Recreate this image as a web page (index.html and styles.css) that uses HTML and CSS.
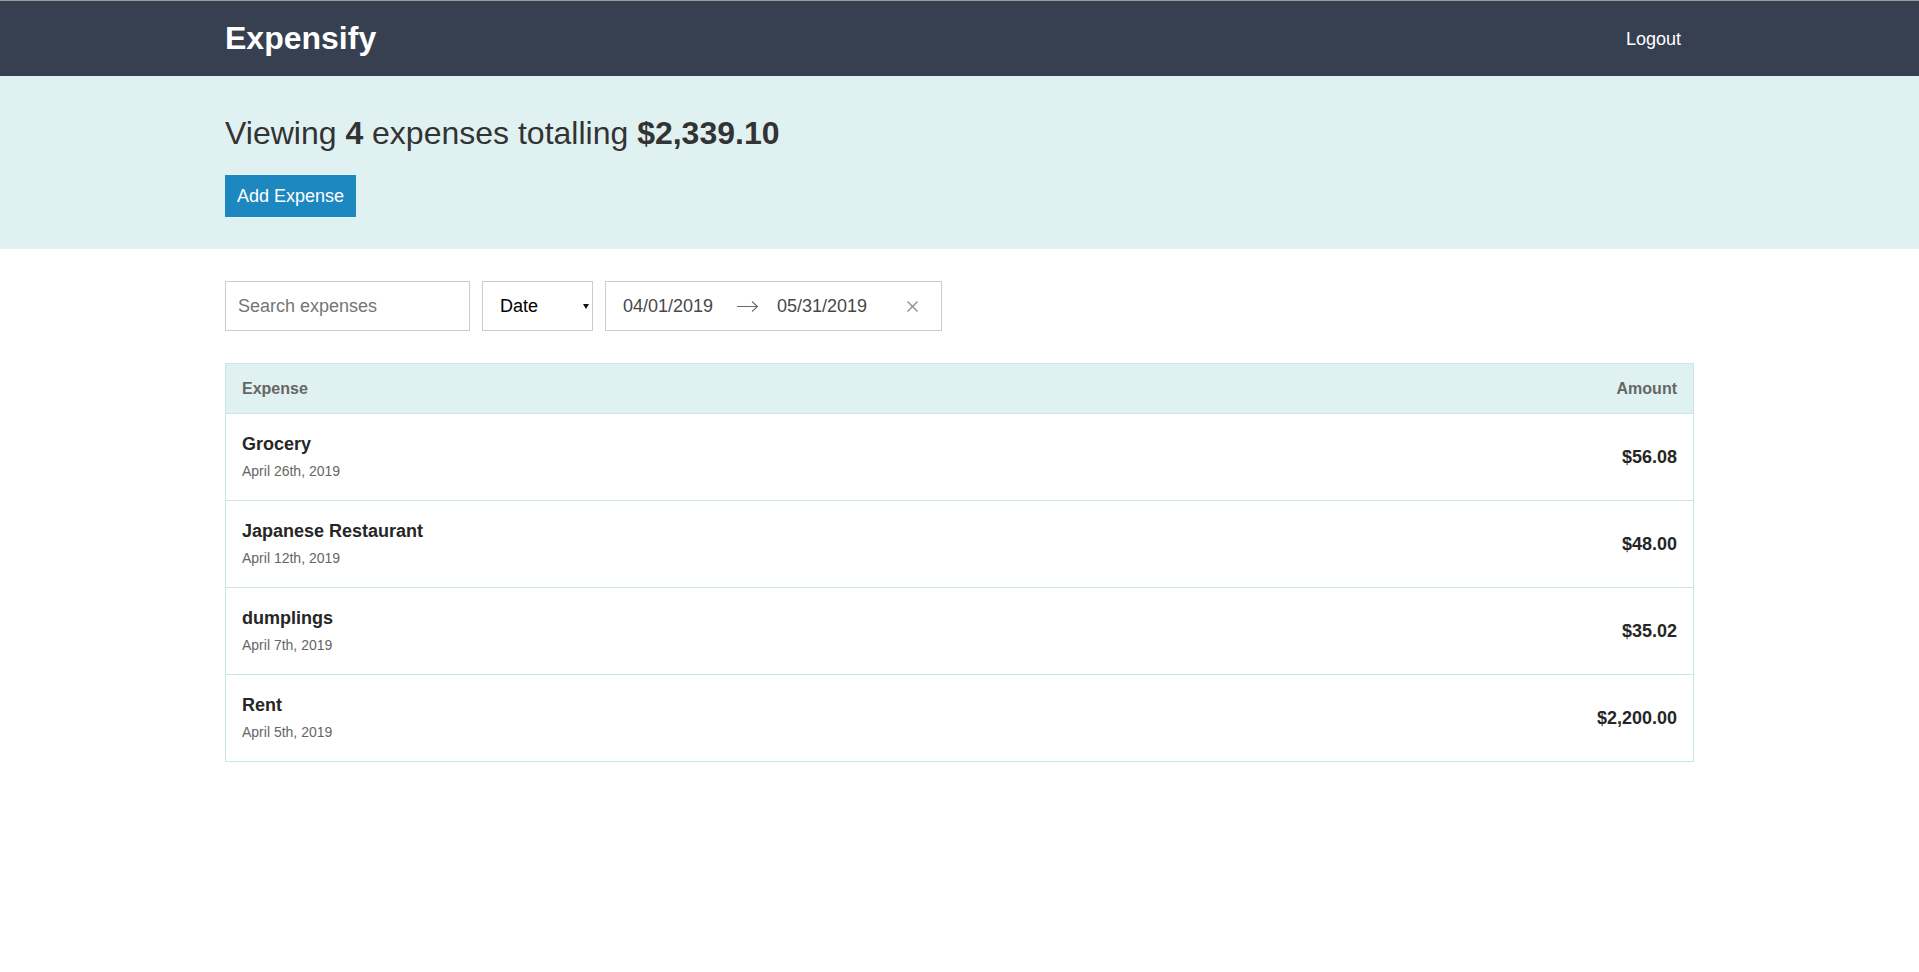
FILE: index.html
```html
<!DOCTYPE html>
<html lang="en">
<head>
<meta charset="utf-8">
<title>Expensify</title>
<link rel="stylesheet" href="styles.css">
</head>
<body>
<header class="header">
  <div class="container header__content">
    <h1 class="header__title">Expensify</h1>
    <button class="button button--link">Logout</button>
  </div>
</header>
<section class="page-header">
  <div class="container">
    <h2 class="page-header__title">Viewing <span>4</span> expenses totalling <span>$2,339.10</span></h2>
    <button class="button">Add Expense</button>
  </div>
</section>
<main class="container">
  <div class="input-group">
    <input class="text-input search" type="text" placeholder="Search expenses">
    <div class="select-wrap">
      <select class="select">
        <option>Date</option>
        <option>Amount</option>
      </select>
    </div>
    <div class="date-range">
      <span class="date-range__date date-range__start">04/01/2019</span>
      <svg class="date-range__arrow" width="22" height="12" viewBox="0 0 22 12"><path d="M0 6.5H20.5M15 1.5L20.5 6.5L15 11.5" fill="none" stroke="#6b6b6b" stroke-width="1.1"/></svg>
      <span class="date-range__date date-range__end">05/31/2019</span>
      <svg class="date-range__clear" width="11" height="11" viewBox="0 0 11 11"><path d="M0.5 0.5L10.5 10.5M10.5 0.5L0.5 10.5" fill="none" stroke="#8a8a8a" stroke-width="1.3"/></svg>
    </div>
  </div>
  <div class="list">
    <div class="list-header">
      <div>Expense</div>
      <div>Amount</div>
    </div>
    <div class="list-body">
      <div class="list-item">
        <div>
          <h3 class="list-item__title">Grocery</h3>
          <div class="list-item__sub-title">April 26th, 2019</div>
        </div>
        <h3 class="list-item__data">$56.08</h3>
      </div>
      <div class="list-item">
        <div>
          <h3 class="list-item__title">Japanese Restaurant</h3>
          <div class="list-item__sub-title">April 12th, 2019</div>
        </div>
        <h3 class="list-item__data">$48.00</h3>
      </div>
      <div class="list-item">
        <div>
          <h3 class="list-item__title">dumplings</h3>
          <div class="list-item__sub-title">April 7th, 2019</div>
        </div>
        <h3 class="list-item__data">$35.02</h3>
      </div>
      <div class="list-item">
        <div>
          <h3 class="list-item__title">Rent</h3>
          <div class="list-item__sub-title">April 5th, 2019</div>
        </div>
        <h3 class="list-item__data">$2,200.00</h3>
      </div>
    </div>
  </div>
</main>
</body>
</html>
```
FILE: styles.css
```css
* {
  box-sizing: border-box;
}

html, body {
  margin: 0;
  padding: 0;
}

body {
  font-family: "Liberation Sans", Arial, Helvetica, sans-serif;
  font-size: 16px;
  line-height: 1.6;
  color: #333333;
  background: #ffffff;
}

.container {
  width: 1469px;
  margin: 0 auto;
}

.header {
  background: #364051;
  border-top: 1px solid #9c9c9c;
}

.header__content {
  display: flex;
  justify-content: space-between;
  align-items: center;
  padding: 12px 0;
}

.header__title {
  margin: 0;
  color: #ffffff;
  font-size: 32px;
  font-weight: 700;
  line-height: 51px;
}

.button {
  background: #1c88bf;
  border: none;
  color: #ffffff;
  font-family: "Liberation Sans", Arial, sans-serif;
  font-size: 18px;
  font-weight: 400;
  line-height: 1;
  padding: 12px;
  cursor: pointer;
}

.button--link {
  background: none;
  margin-right: 1px;
}

.page-header {
  background: #dff2f1;
  padding: 32px 0 32px;
  margin-bottom: 32px;
}

.page-header__title {
  margin: 0 0 16px 0;
  font-size: 32px;
  font-weight: 400;
  line-height: 51px;
  color: #333333;
}

.page-header__title span {
  font-weight: 700;
}

.input-group {
  display: flex;
  gap: 12px;
  margin-bottom: 32px;
}

.text-input,
.select {
  height: 50px;
  border: 1px solid #cacccd;
  font-family: "Liberation Sans", Arial, sans-serif;
  font-size: 18px;
  padding: 0 12px;
  background: #ffffff;
  color: #000000;
  border-radius: 0;
  outline: none;
}

.search {
  width: 245px;
}

.search::placeholder {
  color: #757575;
}

.select-wrap {
  position: relative;
  width: 111px;
}

.select {
  width: 111px;
  padding-left: 17px;
  appearance: none;
  -webkit-appearance: none;
}

.select-wrap::after {
  content: "";
  position: absolute;
  left: 101px;
  top: 23px;
  border-left: 3px solid transparent;
  border-right: 3px solid transparent;
  border-top: 5px solid #111111;
  pointer-events: none;
}

.date-range {
  width: 337px;
  height: 50px;
  border: 1px solid #cacccd;
  display: flex;
  align-items: center;
  padding-left: 17px;
  color: #484848;
  font-size: 18px;
}

.date-range__date {
  width: 89px;
  line-height: 24px;
}

.date-range__arrow {
  margin-left: 25px;
  margin-right: 18px;
}

.date-range__clear {
  margin-left: 41px;
}

.list-header {
  display: flex;
  justify-content: space-between;
  background: #dff2f1;
  border: 1px solid #c9e7e7;
  color: #666666;
  font-weight: 700;
  font-size: 16px;
  line-height: 25px;
  padding: 12px 16px;
}

.list-item {
  display: flex;
  justify-content: space-between;
  align-items: center;
  border: 1px solid #c9e7e7;
  border-top: none;
  padding: 16px;
  height: 87px;
}

.list-item__title {
  margin: 0;
  font-size: 18px;
  line-height: 29px;
  font-weight: 700;
  color: #262626;
}

.list-item__sub-title {
  color: #666666;
  font-size: 14px;
  line-height: 25px;
}

.list-item__data {
  margin: 0;
  font-size: 18px;
  line-height: 29px;
  font-weight: 700;
  color: #262626;
}
```
